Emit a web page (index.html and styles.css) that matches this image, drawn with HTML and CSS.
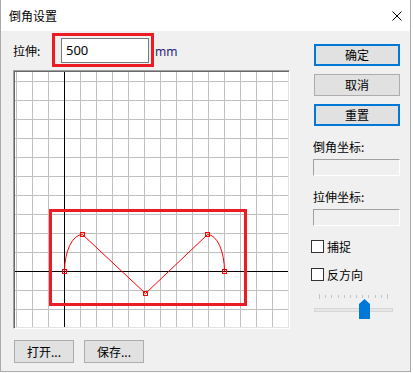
FILE: index.html
```html
<!DOCTYPE html>
<html lang="zh">
<head>
<meta charset="utf-8">
<title>倒角设置</title>
<link rel="stylesheet" href="styles.css">
</head>
<body>
<div class="window">
  <div class="titlebar">
    <span class="title">倒角设置</span>
    <svg class="close" width="10" height="10" viewBox="0 0 10 10"><path d="M0.5,0.5 L9.5,9.5 M9.5,0.5 L0.5,9.5" stroke="#000" stroke-width="1" fill="none"/></svg>
  </div>
  <div class="body">
    <div class="leftcol">
      <div class="row">
        <span class="lbl">拉伸:</span>
        <div class="input-wrap">
          <div class="input">500</div>
          <div class="hl hl-input"></div>
        </div>
        <span class="unit">mm</span>
      </div>
      <div class="canvas">
        <svg class="grid" width="273" height="255" viewBox="0 0 273 255" shape-rendering="crispEdges">
          <g stroke="#c0c0c0" stroke-width="1">
            <path d="M1.5,0V255M17.5,0V255M33.5,0V255M65.5,0V255M81.5,0V255M97.5,0V255M113.5,0V255M129.5,0V255M145.5,0V255M161.5,0V255M177.5,0V255M193.5,0V255M209.5,0V255M225.5,0V255M241.5,0V255M257.5,0V255"/>
            <path d="M0,9.5H273M0,28.5H273M0,47.5H273M0,66.5H273M0,85.5H273M0,104.5H273M0,123.5H273M0,142.5H273M0,161.5H273M0,180.5H273M0,218.5H273M0,237.5H273"/>
          </g>
          <g stroke="#000" stroke-width="1">
            <path d="M49.5,0V255M0,199.5H273"/>
          </g>
          <path d="M49.5,199.5 A18,37 0 0 1 67.5,162.5 L130.5,221.5 L192.5,162.5 A17,37 0 0 1 209.5,199.5" stroke="#ff0000" stroke-width="1" fill="none" shape-rendering="auto"/>
          <g stroke="#ff0000" stroke-width="1" fill="none">
            <rect x="47.5" y="197.5" width="4" height="4"/>
            <rect x="65.5" y="160.5" width="4" height="4"/>
            <rect x="128.5" y="219.5" width="4" height="4"/>
            <rect x="190.5" y="160.5" width="4" height="4"/>
            <rect x="207.5" y="197.5" width="4" height="4"/>
          </g>
        </svg>
        <div class="hl hl-curve"></div>
      </div>
      <div class="file-buttons">
        <div class="btn fbtn">打开...</div>
        <div class="btn fbtn">保存...</div>
      </div>
    </div>
    <div class="rightcol">
      <div class="btn rbtn default">确定</div>
      <div class="btn rbtn">取消</div>
      <div class="btn rbtn default">重置</div>
      <div class="field-label">倒角坐标:</div>
      <div class="field"></div>
      <div class="field-label">拉伸坐标:</div>
      <div class="field"></div>
      <div class="check first"><span class="box"></span><span>捕捉</span></div>
      <div class="check"><span class="box"></span><span>反方向</span></div>
      <div class="slider">
        <div class="ticks">
          <i class="tick end"></i><i class="tick"></i><i class="tick"></i><i class="tick"></i><i class="tick"></i><i class="tick"></i><i class="tick"></i><i class="tick"></i><i class="tick"></i><i class="tick"></i><i class="tick"></i><i class="tick end"></i>
        </div>
        <div class="track"></div>
        <div class="thumb"></div>
      </div>
    </div>
  </div>
</div>
</body>
</html>
```
FILE: styles.css
```css
html, body {
  margin: 0;
  padding: 0;
  background: #ffffff;
}
body {
  font-family: "Noto Sans CJK SC", "Noto Sans", sans-serif;
  font-size: 12px;
  color: #000;
}
.window {
  width: 411px;
  height: 372px;
  box-sizing: border-box;
  border: 1px solid #aaaaaa;
  border-top: none;
  background: #f0f0f0;
  display: flex;
  flex-direction: column;
}
.titlebar {
  flex: none;
  height: 31px;
  background: #ffffff;
  display: flex;
  align-items: center;
  justify-content: space-between;
  padding: 0 8px 0 8px;
  box-sizing: border-box;
}
.title {
  line-height: 16px;
}
.close {
  display: block;
  margin-top: 1px;
}
.body {
  flex: 1;
  display: flex;
  padding-left: 12px;
  gap: 21px;
}
.leftcol {
  width: 277px;
  padding-top: 7px;
  display: flex;
  flex-direction: column;
}
.row {
  display: flex;
  align-items: center;
  height: 25px;
}
.lbl {
  width: 48px;
  line-height: 16px;
}
.input-wrap {
  position: relative;
  width: 88px;
  height: 25px;
}
.input {
  box-sizing: border-box;
  width: 88px;
  height: 25px;
  border: 1px solid #7a7a7a;
  background: #ffffff;
  padding-left: 4px;
  line-height: 22px;
  font-family: "Noto Sans", sans-serif;
  font-size: 13px;
}
.unit {
  margin-left: 6px;
  margin-top: 2px;
  color: #1e1e78;
  font-family: "Noto Sans", sans-serif;
  font-size: 12px;
}
.hl {
  position: absolute;
  box-sizing: border-box;
  border: 3px solid #ed1c24;
}
.hl-input {
  left: -9px;
  top: -5px;
  width: 102px;
  height: 34px;
}
.canvas {
  position: relative;
  margin-top: 7px;
  width: 277px;
  height: 259px;
  box-sizing: border-box;
  border: 1px solid;
  border-color: #a0a0a0 #ffffff #ffffff #a0a0a0;
  box-shadow: inset 1px 1px 0 #696969, inset -1px -1px 0 #e3e3e3;
  background: #ffffff;
}
.grid {
  display: block;
  margin: 1px;
}
.hl-curve {
  left: 35px;
  top: 138px;
  width: 198px;
  height: 97px;
}
.file-buttons {
  display: flex;
  gap: 10px;
  margin-top: 11px;
  margin-left: 1px;
}
.btn {
  box-sizing: border-box;
  border: 1px solid #adadad;
  background: #e1e1e1;
  display: flex;
  align-items: center;
  justify-content: center;
  line-height: 16px;
}
.fbtn {
  width: 60px;
  height: 23px;
}
.rightcol {
  width: 90px;
  padding-top: 13px;
  display: flex;
  flex-direction: column;
}
.rbtn {
  margin-left: 3px;
  width: 86px;
  height: 22px;
}
.rbtn + .rbtn {
  margin-top: 8px;
}
.rbtn.default {
  border: 2px solid #0078d7;
}
.field-label {
  margin-left: 2px;
  margin-top: 13px;
  line-height: 16px;
}
.field {
  margin-left: 2px;
  margin-top: 4px;
  width: 87px;
  height: 17px;
  box-sizing: border-box;
  border: 1px solid;
  border-color: #a0a0a0 #ffffff #ffffff #a0a0a0;
}
.check {
  display: flex;
  align-items: center;
  height: 13px;
  margin-top: 15px;
  line-height: 13px;
}
.check.first {
  margin-top: 14px;
}
.box {
  width: 13px;
  height: 13px;
  box-sizing: border-box;
  border: 1px solid #333333;
  background: #ffffff;
  margin-right: 3px;
  flex: none;
}
.slider {
  position: relative;
  margin-top: 13px;
  height: 25px;
}
.ticks {
  display: flex;
  justify-content: space-between;
  align-items: center;
  margin-left: 8px;
  width: 69px;
  height: 5px;
}
.tick {
  display: block;
  width: 1px;
  height: 3px;
  background: #c4c4c4;
}
.tick.end {
  height: 5px;
}
.track {
  margin-top: 9px;
  margin-left: 3px;
  width: 79px;
  height: 4px;
  box-sizing: border-box;
  background: #e7e7e7;
  border: 1px solid #d6d6d6;
}
.thumb {
  position: absolute;
  left: 48px;
  top: 5px;
  width: 11px;
  height: 20px;
  background: #0078d7;
  clip-path: polygon(50% 0, 100% 25%, 100% 100%, 0 100%, 0 25%);
}
```
